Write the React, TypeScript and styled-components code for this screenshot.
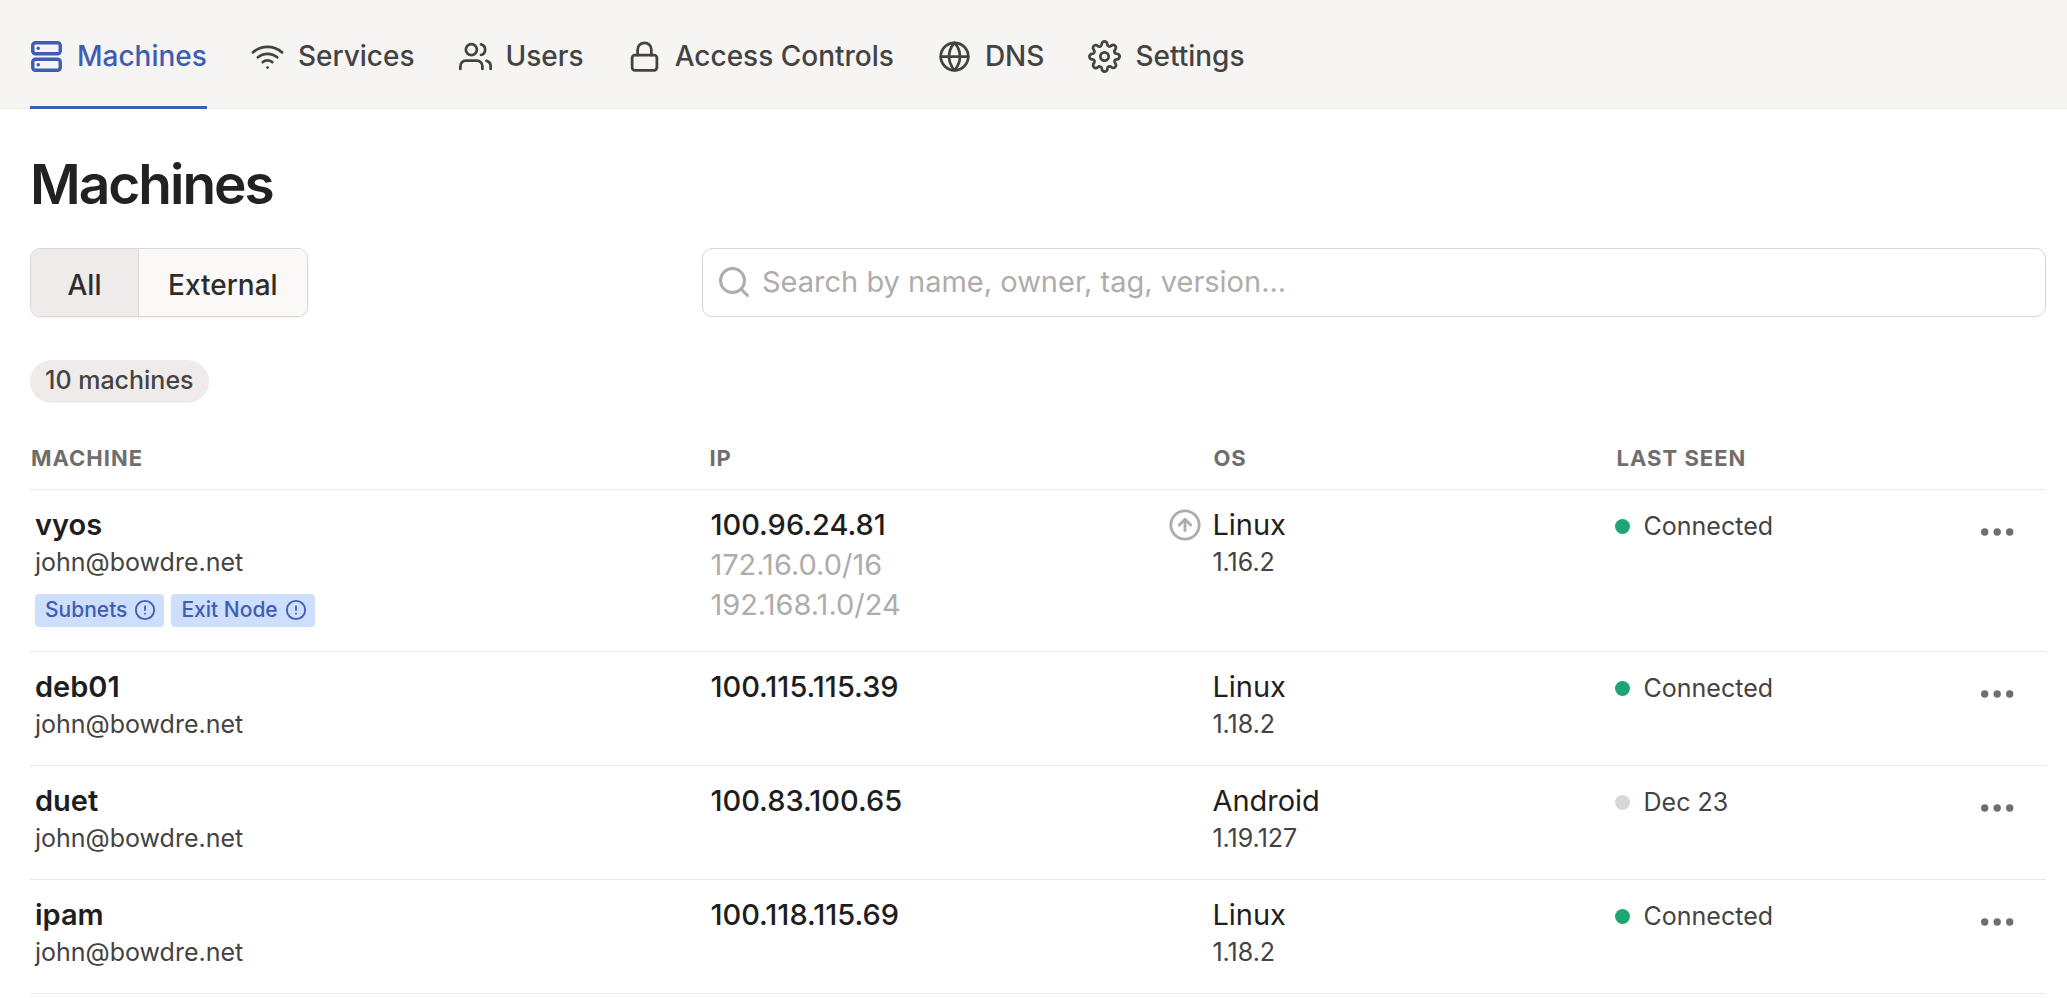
import React from 'react';
import styled, { createGlobalStyle, css } from 'styled-components';
import { FiServer, FiWifi, FiUsers, FiLock, FiGlobe, FiSettings, FiSearch, FiAlertCircle, FiArrowUpCircle } from 'react-icons/fi';
import type { IconType } from 'react-icons';

const GlobalStyle = createGlobalStyle`
  *, *::before, *::after { box-sizing: border-box; }
  body {
    margin: 0;
    background: #fff;
    color: #1f1e1e;
    font-family: Inter, "Liberation Sans", sans-serif;
    font-size: 29px;
    line-height: 40px;
    -webkit-font-smoothing: antialiased;
  }
  button, input { font: inherit; color: inherit; margin: 0; }
`;

const NavBar = styled.nav`
  display: flex;
  gap: 44px;
  height: 109px;
  padding: 0 30px;
  background: #f6f5f4;
  border-bottom: 1px solid #eeebea;
`;

const NavLink = styled.a<{ $active?: boolean }>`
  display: flex;
  align-items: center;
  gap: 14px;
  height: 109px;
  padding-top: 6px;
  border-bottom: 3px solid transparent;
  color: #444342;
  font-size: 28px;
  font-weight: 500;
  text-decoration: none;
  white-space: nowrap;
  svg { width: 33px; height: 33px; flex: none; }
  ${(p) => p.$active && css`
    color: #3f5db3;
    border-color: #3f5db3;
    svg { stroke-width: 2.5; }
  `}
`;

const Main = styled.main`
  padding: 41px 21px 0 30px;
`;

const Title = styled.h1`
  margin: 0;
  font-size: 55px;
  line-height: 68px;
  font-weight: 600;
  letter-spacing: -2px;
  color: #232222;
`;

const Toolbar = styled.div`
  display: grid;
  grid-template-columns: 1fr 2fr;
  align-items: start;
  margin-top: 30px;
`;

const Segments = styled.div`
  display: flex;
  width: max-content;
  height: 69px;
  border: 1px solid #d9d6d5;
  border-radius: 10px;
  overflow: hidden;
  box-shadow: 0 1px 2px rgba(0, 0, 0, 0.06);
`;

const Segment = styled.button<{ $selected?: boolean }>`
  padding: 4px 29px 0;
  min-width: 107px;
  border: 0;
  background: ${(p) => (p.$selected ? '#eeebea' : '#faf9f8')};
  font-size: 28px;
  font-weight: 500;
  color: #2e2d2d;
  & + & { border-left: 1px solid #d9d6d5; }
`;

const SearchBox = styled.label`
  display: flex;
  align-items: center;
  gap: 10px;
  height: 69px;
  padding: 0 13px 1px;
  border: 1px solid #d9d6d5;
  border-radius: 10px;
  color: #afacab;
  svg { width: 36px; height: 36px; flex: none; }
`;

const SearchInput = styled.input`
  flex: 1;
  min-width: 0;
  padding: 0;
  border: 0;
  outline: 0;
  background: none;
  &::placeholder { color: #afacab; opacity: 1; }
`;

const CountPill = styled.div`
  width: max-content;
  margin-top: 43px;
  padding: 0 15px 2px;
  border-radius: 22px;
  background: #eeebea;
  color: #444342;
  font-size: 25px;
  line-height: 41px;
  font-weight: 500;
`;

const Table = styled.table`
  width: 100%;
  margin-top: 25px;
  border-collapse: collapse;
  table-layout: fixed;
`;

const Col = styled.col<{ $w?: string }>`
  width: ${(p) => p.$w ?? 'auto'};
`;

const HeadCell = styled.th<{ $pad: number }>`
  height: 61px;
  padding: 0 0 0 ${(p) => p.$pad}px;
  border-bottom: 1px solid #eae9e8;
  text-align: left;
  font-size: 22px;
  line-height: 30px;
  font-weight: 700;
  letter-spacing: 1px;
  text-transform: uppercase;
  color: #706e6d;
`;

const Cell = styled.td<{ $pad: number }>`
  padding: 15px 0 23px ${(p) => p.$pad}px;
  border-bottom: 1px solid #eae9e8;
  vertical-align: top;
`;

const Name = styled.div`font-weight: 600;`;
const Ip = styled.div`font-weight: 500;`;
const Route = styled.div`color: #afacab;`;

const Sub = styled.div`
  font-size: 25px;
  line-height: 35px;
  color: #444342;
`;

const Tags = styled.div`
  display: flex;
  gap: 7px;
  margin: 14px 0 1px;
`;

const Tag = styled.span`
  display: flex;
  align-items: center;
  gap: 7px;
  height: 33px;
  padding: 0 8px 0 10px;
  border-radius: 4px;
  background: #cedefd;
  color: #3f5db3;
  font-size: 21px;
  line-height: 30px;
  font-weight: 500;
  svg { width: 22px; height: 22px; }
`;

const Os = styled.div`
  display: flex;
  align-items: center;
  margin-left: -44px;
  gap: 10px;
`;

const UpdateSlot = styled.span`
  display: flex;
  width: 34px;
  color: #afacab;
  svg { width: 34px; height: 34px; }
`;

const Seen = styled.div`
  display: flex;
  align-items: center;
  gap: 14px;
  padding-top: 4px;
  font-size: 25px;
  line-height: 35px;
  color: #444342;
`;

const Dot = styled.span<{ $on: boolean }>`
  width: 15px;
  height: 15px;
  border-radius: 50%;
  background: ${(p) => (p.$on ? '#1ea672' : '#d9d6d5')};
`;

const MenuButton = styled.button`
  display: flex;
  margin: 13px 32px 0 auto;
  padding: 10px 0;
  border: 0;
  background: none;
  color: #706e6d;
`;

const nav: { label: string; icon: IconType }[] = [
  { label: 'Machines', icon: FiServer },
  { label: 'Services', icon: FiWifi },
  { label: 'Users', icon: FiUsers },
  { label: 'Access Controls', icon: FiLock },
  { label: 'DNS', icon: FiGlobe },
  { label: 'Settings', icon: FiSettings },
];

type Machine = {
  name: string;
  ip: string;
  routes?: string[];
  tags?: string[];
  os: string;
  version: string;
  update?: boolean;
  seen: string;
};

const machines: Machine[] = [
  {
    name: 'vyos',
    ip: '100.96.24.81',
    routes: ['172.16.0.0/16', '192.168.1.0/24'],
    tags: ['Subnets', 'Exit Node'],
    os: 'Linux',
    version: '1.16.2',
    update: true,
    seen: 'Connected',
  },
  { name: 'deb01', ip: '100.115.115.39', os: 'Linux', version: '1.18.2', seen: 'Connected' },
  { name: 'duet', ip: '100.83.100.65', os: 'Android', version: '1.19.127', seen: 'Dec 23' },
  { name: 'ipam', ip: '100.118.115.69', os: 'Linux', version: '1.18.2', seen: 'Connected' },
];

function MachineRow({ m }: { m: Machine }) {
  return (
    <tr>
      <Cell $pad={5}>
        <Name>{m.name}</Name>
        <Sub>john@bowdre.net</Sub>
        {m.tags && (
          <Tags>
            {m.tags.map((t) => (
              <Tag key={t}>
                {t}
                <FiAlertCircle />
              </Tag>
            ))}
          </Tags>
        )}
      </Cell>
      <Cell $pad={3}>
        <Ip>{m.ip}</Ip>
        {m.routes?.map((r) => <Route key={r}>{r}</Route>)}
      </Cell>
      <Cell $pad={1}>
        <Os>
          <UpdateSlot>{m.update && <FiArrowUpCircle />}</UpdateSlot>
          {m.os}
        </Os>
        <Sub>{m.version}</Sub>
      </Cell>
      <Cell $pad={0}>
        <Seen>
          <Dot $on={m.seen === 'Connected'} />
          {m.seen}
        </Seen>
      </Cell>
      <Cell $pad={0}>
        <MenuButton aria-label={`Actions for ${m.name}`}>
          <svg width="33" height="8" viewBox="0 0 33 8" fill="currentColor">
            <circle cx="3.7" cy="4" r="3.7" />
            <circle cx="16.2" cy="4" r="3.7" />
            <circle cx="28.7" cy="4" r="3.7" />
          </svg>
        </MenuButton>
      </Cell>
    </tr>
  );
}

export default function App() {
  return (
    <>
      <GlobalStyle />
      <NavBar>
        {nav.map(({ label, icon: Icon }, i) => (
          <NavLink key={label} href="#" $active={i === 0}>
            <Icon />
            {label}
          </NavLink>
        ))}
      </NavBar>
      <Main>
        <Title>Machines</Title>
        <Toolbar>
          <Segments>
            <Segment $selected>All</Segment>
            <Segment>External</Segment>
          </Segments>
          <SearchBox>
            <FiSearch />
            <SearchInput aria-label="Search machines" placeholder="Search by name, owner, tag, version..." />
          </SearchBox>
        </Toolbar>
        <CountPill>10 machines</CountPill>
        <Table>
          <colgroup>
            <Col $w="33.6%" />
            <Col $w="25%" />
            <Col $w="20%" />
            <Col $w="16%" />
            <Col />
          </colgroup>
          <thead>
            <tr>
              <HeadCell $pad={1}>Machine</HeadCell>
              <HeadCell $pad={2}>IP</HeadCell>
              <HeadCell $pad={2}>OS</HeadCell>
              <HeadCell $pad={2}>Last seen</HeadCell>
              <HeadCell $pad={0} aria-label="Actions" />
            </tr>
          </thead>
          <tbody>
            {machines.map((m) => (
              <MachineRow key={m.name} m={m} />
            ))}
          </tbody>
        </Table>
      </Main>
    </>
  );
}
